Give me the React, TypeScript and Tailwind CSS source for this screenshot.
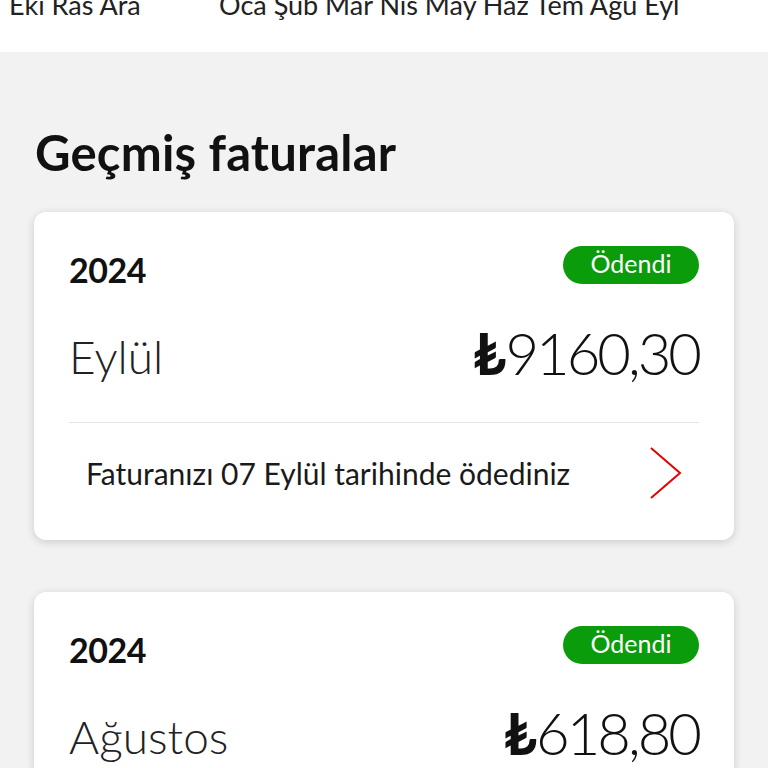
type Bill = {
  year: string
  month: string
  amount: string
  note?: string
}

const bills: Bill[] = [
  { year: "2024", month: "Eylül", amount: "9160,30", note: "Faturanızı 07 Eylül tarihinde ödediniz" },
  { year: "2024", month: "Ağustos", amount: "618,80" },
]

function BillCard({ bill }: { bill: Bill }) {
  return (
    <div className="bg-white rounded-[12px] shadow-[0_2px_8px_rgba(0,0,0,0.16)] px-[35px] pt-[34px] pb-[17px]">
      <div className="flex items-center justify-between h-[38px]">
        <span className="text-[34px] font-bold text-[#111] tracking-[-0.5px] mt-[8px]">{bill.year}</span>
        <span className="bg-[#0b9c0b] text-white rounded-full h-[38px] w-[136px] flex items-center justify-center text-[25px] leading-none pb-[3px]">
          Ödendi
        </span>
      </div>
      <div className="flex items-end justify-between mt-[38px] h-[60px]">
        <span className="text-[46px] font-light text-[#222] leading-none pb-[2px]">{bill.month}</span>
        <span className="text-[58px] font-light text-[#111] leading-none tracking-[-3px]">
          <span className="font-bold mr-[2px]">₺</span>
          {bill.amount}
        </span>
      </div>
      {bill.note && (
        <>
          <div className="h-px bg-[#e4e4e4] mt-[40px]" />
          <div className="flex items-center justify-between h-[100px] pl-[17px]">
            <span className="text-[30px] text-[#1a1a1a]">{bill.note}</span>
            <svg width="32" height="52" viewBox="0 0 32 52" className="mr-[17px]" fill="none">
              <polyline points="1,1 30,26 1,51" stroke="#e60000" strokeWidth="2" strokeLinejoin="miter" />
            </svg>
          </div>
        </>
      )}
    </div>
  )
}

export default function App() {
  return (
    <div className="w-[768px] h-[768px] overflow-hidden bg-[#f2f2f2] font-['Lato',sans-serif]">
      <div className="bg-white h-[52px] overflow-hidden">
        <div className="flex text-[27px] text-[#222] leading-none -mt-[9px] whitespace-nowrap">
          <span className="ml-[9px] w-[210px]">Eki Ras Ara</span>
          <span>Oca Şub Mar Nis May Haz Tem Ağu Eyl</span>
        </div>
      </div>
      <div className="px-[34px]">
        <h2 className="text-[49px] font-bold text-[#111] pt-[70px] pb-[30px] pl-[1px] leading-[60px] tracking-[0.2px]">Geçmiş faturalar</h2>
        <div className="flex flex-col gap-[52px]">
          {bills.map((b) => (
            <BillCard key={b.month} bill={b} />
          ))}
        </div>
      </div>
    </div>
  )
}
